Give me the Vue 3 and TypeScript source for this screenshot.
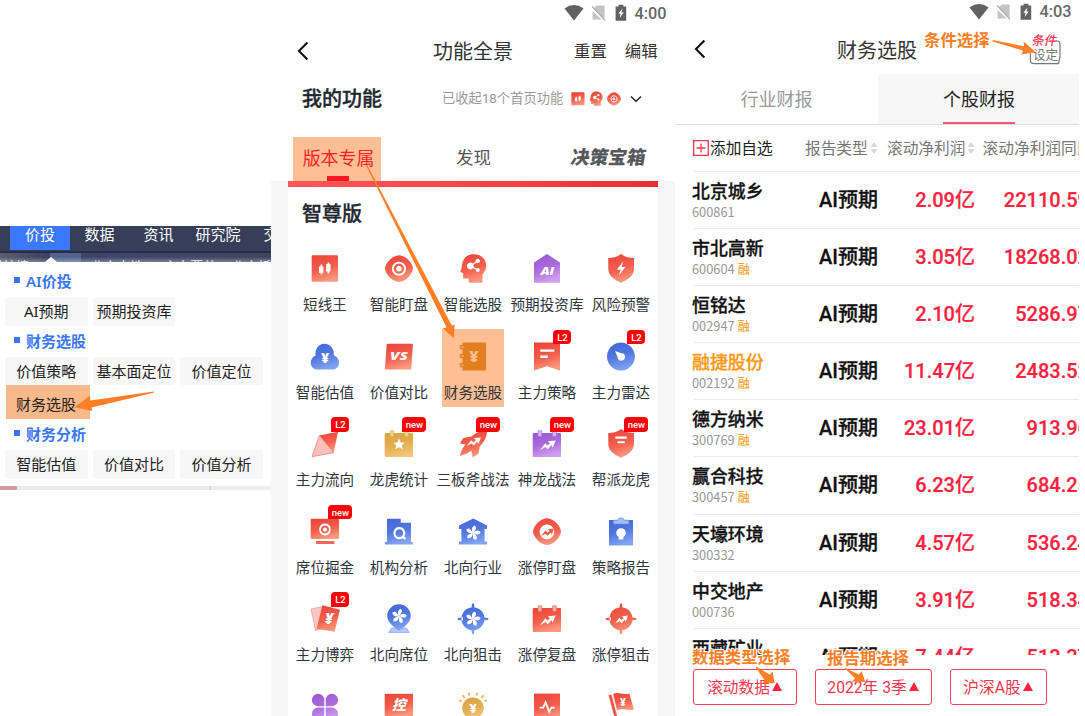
<script setup lang="ts">
interface Layer {
  d: string
  fill?: string
  stroke?: string
  w?: number
}
interface Glyph {
  t: string
  x: number
  y: number
  size: number
  fill?: string
  italic?: boolean
  len?: number
}
interface Icon {
  layers: Layer[]
  glyph?: Glyph
}
interface Tool {
  name: string
  icon: string
  badge?: string
  active?: boolean
}
interface Stock {
  name: string
  code: string
  margin?: boolean
  hot?: boolean
  profit: string
  growth: string
}

const R = 'url(#grad-red)'
const B = 'url(#grad-blue)'
const P = 'url(#grad-purple)'
const Y = 'url(#grad-gold)'

const shield = 'M16 1C20 4 25 5 29 5V16C29 23 22 27 16 29.7C10 27 3.3 23 3.3 16V5C8 5 12 4 16 1Z'
const eye = 'M2 15.6C2 11 9 2.3 16 2.3S30 11 30 15.6S23 29 16 29S2 20.2 2 15.6Z'
const zig = 'M9 22.2L14.3 15.2L16.6 17.6L19 15.2L16.8 13.2L24.8 12.4L21.5 19.8L20.6 17L16.8 21.2L14.4 19Z'
const calendar = 'M1.7 6Q1.7 5 3 5H29Q30 5 30 6V28Q30 29 29 29H3Q1.7 29 1.7 28Z'
const calTabs = 'M7 2.8H10.8V8.4H7ZM21.6 2.8H25.4V8.4H21.6Z'
const petal = (cx: number, cy: number, r: number): string => {
  let out = ''
  for (let i = 0; i < 5; i++) {
    const a = ((i * 72 - 80) * Math.PI) / 180
    const pt = (rad: number, off: number) =>
      `${(cx + rad * Math.cos(a + off)).toFixed(2)} ${(cy + rad * Math.sin(a + off)).toFixed(2)}`
    out += `M${cx} ${cy}Q${pt(r * 0.75, -0.7)} ${pt(r, 0)}Q${pt(r * 0.9, 0.5)} ${pt(r * 0.5, 0.45)}Z`
  }
  return out
}
const star = 'M16 10.6L17.7 14.4L21.6 14.8L18.7 17.4L19.6 21.3L16 19.3L12.4 21.3L13.3 17.4L10.4 14.8L14.3 14.4Z'
const cross = 'M16 4.2A11.6 11.6 0 1 1 15.9 4.2ZM15 .8Q16 0 17 .8L17.6 6H14.4ZM14.4 26H17.6L17 30.7Q16 31.6 15 30.7ZM1 15Q.2 16 1 17L6 17.4V14.3ZM31 15Q31.8 16 31 17L26 17.4V14.3Z'

const icons: Record<string, Icon> = {
  candles: {
    layers: [
      { d: 'M2.7 3.3Q2.7 2.3 3.7 2.3H28Q29 2.3 29 3.3V27.7Q29 28.7 28 28.7H3.7Q2.7 28.7 2.7 27.7Z', fill: R },
      { d: 'M10 13.4H11.6V11.6H13.2V13.4H14.4V20H13.2V21.6H11.6V20H10ZM17 11H18.6V9.6H20.2V11H21.5V18.4H20.2V20.4H18.6V18.4H17Z', fill: '#fff' },
    ],
  },
  eye: {
    layers: [
      { d: eye, fill: R },
      { d: 'M16 9.6A6.1 6.1 0 1 1 15.9 9.6Z', stroke: '#fff', w: 1.9 },
      { d: 'M16 12.8A2.9 2.9 0 1 1 15.9 12.8Z', fill: '#fff' },
    ],
  },
  head: {
    layers: [
      { d: 'M12 29.7L11.5 25.6H7.3Q6.2 25.6 6.2 24.2V20.4L3.2 18.6Q4.7 16 5 12.6C5.6 5 10.5 1.2 16.5 1.2C24 1.2 29.2 6 29.2 12.4C29.2 17 27 18.8 25.5 22V29.7Z', fill: R },
      { d: 'M13.4 13L20.6 8M13.4 13L20.6 17', stroke: '#fff', w: 1.4 },
      { d: 'M13.4 9.6A3.4 3.4 0 1 1 13.3 9.6ZM20.8 5.8A2.2 2.2 0 1 1 20.7 5.8ZM20.8 15A2 2 0 1 1 20.7 15Z', fill: '#fff' },
    ],
  },
  aihouse: {
    layers: [{ d: 'M16 1L29 9.6V28.7Q29 29.7 28 29.7H4Q3 29.7 3 28.7V9.6Z', fill: P }],
    glyph: { t: 'AI', x: 16.4, y: 21.8, size: 11, italic: true, len: 13.5 },
  },
  shieldBolt: {
    layers: [
      { d: shield, fill: R },
      { d: 'M18 8.5L11.8 16.8H15.5L14 22.3L20.5 14H16.8Z', fill: '#fff' },
    ],
  },
  cloud: {
    layers: [{ d: 'M8 28.5C3.8 28.5 1.7 25 1.7 21.8C1.7 18.6 3.6 16 6.6 14.6C5.6 8 9.6 2.8 15.5 2.8S25.4 8 24.8 14.2C28.2 15.6 30 18.2 30 21.8C30 25.6 27.6 28.5 24 28.5Z', fill: B }],
    glyph: { t: '¥', x: 16, y: 21.5, size: 14 },
  },
  vs: {
    layers: [{ d: 'M3.7 3.6Q3.8 2.8 4.8 2.8H29.2Q30 2.8 29.9 3.8L28.3 27.7Q28.2 28.5 27.4 28.5H2.6Q1.8 28.5 1.9 27.5Z', fill: R }],
    glyph: { t: 'VS', x: 16, y: 19.4, size: 11, italic: true, len: 18 },
  },
  notebook: {
    layers: [
      { d: 'M5.5 1.5H28Q29 1.5 29 2.5V28.5Q29 29.5 28 29.5H5.5Z', fill: '#e47f20' },
      { d: 'M3.2 4.4H7.5V7.8H3.2ZM3.2 13.4H7.5V16.8H3.2ZM3.2 22.4H7.5V25.8H3.2Z', fill: '#f39a4e', stroke: '#e07b1f', w: 1 },
    ],
    glyph: { t: '¥', x: 17, y: 20.5, size: 16, fill: '#ffc090' },
  },
  bookmark: {
    layers: [
      { d: 'M3 1.5H29V29.5L16 25.2L3 29.5Z', fill: R },
      { d: 'M9.3 8.6H23.3V10.8H9.3ZM9.3 14.6H16.8V16.9H9.3Z', fill: '#fff' },
    ],
  },
  radar: {
    layers: [
      { d: 'M16 1.6A14 14 0 1 1 15.9 1.6Z', fill: B },
      { d: 'M10 10L16.6 12.3A3.7 3.7 0 1 1 12.6 16.2Z', fill: '#fff' },
    ],
  },
  kite: {
    layers: [
      { d: 'M10.3 7.5L29 3.7L24.7 24.7Z', fill: R },
      { d: 'M10.3 7.5L24.7 24.7L3 28.7Z', fill: '#fbc0bc', stroke: '#ef7770', w: 0.7 },
    ],
  },
  calStar: {
    layers: [{ d: calendar, fill: Y }, { d: calTabs, fill: '#f5d38c', stroke: '#dba744', w: 0.6 }, { d: star, fill: '#fff' }],
  },
  rocket: {
    layers: [
      { d: 'M30 2.5C24 2.4 18.6 4.4 14.5 8.6L6.5 10L2.8 15.2L8.5 16.5L5.4 20.8L2.6 28L10 25.5L14.2 22.6L15.8 29.4L21.6 25.4L22.7 18.5C27 14 30.2 9 30 2.5Z', fill: R },
      { d: 'M9.6 18L14.3 12.2L16.6 14.4L18.8 12L16.8 10L24 9.4L21.2 16.2L20.2 13.6L16.8 17.6L14.4 15.6Z', fill: '#fff' },
    ],
  },
  calPurple: {
    layers: [{ d: calendar, fill: P }, { d: calTabs, fill: '#ddb8f2', stroke: '#a866d8', w: 0.6 }, { d: zig, fill: '#fff' }],
  },
  shieldLines: {
    layers: [{ d: shield, fill: R }, { d: 'M10.3 8.6H21.8V10.8H10.3ZM12.4 13.2H19.8V15.2H12.4Z', fill: '#fff' }],
  },
  monitor: {
    layers: [
      { d: 'M1.7 3.8Q1.7 2.8 2.7 2.8H29Q30 2.8 30 3.8V22Q30 23 29 23H2.7Q1.7 23 1.7 22Z', fill: R },
      { d: 'M7 25H25.4V28H7Z', fill: '#f0685b' },
      { d: 'M16 8.5A5 5 0 1 1 15.9 8.5Z', stroke: '#fff', w: 1.9 },
      { d: 'M16 11.5A2 2 0 1 1 15.9 11.5Z', fill: '#fff' },
    ],
  },
  building: {
    layers: [
      { d: 'M4 2.8H17.7V6.8H28V26H29.7V28.5H2V26H4Z', fill: B },
      { d: 'M16.4 12.2A5 5 0 1 1 16.3 12.2ZM19.6 20.6L22.4 23', stroke: '#fff', w: 2.2 },
    ],
  },
  houseFlower: {
    layers: [
      { d: 'M16.3 2.5L30 9.6V13H27.6V25.5H30V28.6H2V25.5H4.4V13H2V9.6Z', fill: B },
      { d: petal(16, 17, 7.6), fill: '#fff' },
    ],
  },
  eyeZig: {
    layers: [
      { d: eye, fill: R },
      { d: 'M16 8.6A7.3 7.3 0 1 1 15.9 8.6Z', fill: '#fff' },
      { d: 'M10 20.2L14.3 14.6L16.6 16.8L18.6 15L17 13.2L22.8 12.6L20.8 18.4L19.8 16.6L16.6 19.8L14.4 17.8Z', fill: '#ef5540' },
    ],
  },
  clipboard: {
    layers: [
      { d: 'M4 4H28V29.5H4Z', fill: B },
      { d: 'M8.5 4.2H12.6Q13 1.8 16 1.8T19.4 4.2H23.8V8H8.5Z', fill: '#a6bcf5', stroke: '#6f8fe6', w: 0.6 },
      { d: 'M16 12.2A4.6 4.6 0 0 1 18.4 20.8V23.4H13.6V20.8A4.6 4.6 0 0 1 16 12.2Z', fill: '#fff' },
    ],
  },
  cards: {
    layers: [
      { d: 'M2 6L14 3.4L18 24.6L6.5 27.6Z', fill: '#fac6c4', stroke: '#f08b86', w: 0.6 },
      { d: 'M13.4 2.2L31 6.8L25.6 28.8L7.6 25.8Z', fill: R },
    ],
    glyph: { t: '¥', x: 20, y: 20.5, size: 15, italic: true },
  },
  pin: {
    layers: [
      { d: 'M8.5 25H23.5L26.3 29.5H5.7Z', fill: '#b5c7f7', stroke: '#7898ec', w: 0.6 },
      { d: 'M16 1.3A11.8 11.8 0 0 1 27.8 13C27.8 19 21 25 16 27.4C11 25 4.2 19 4.2 13A11.8 11.8 0 0 1 16 1.3Z', fill: B },
      { d: petal(16, 13.2, 7.6), fill: '#fff' },
    ],
  },
  crossFlower: {
    layers: [{ d: cross, fill: B }, { d: petal(16, 16, 7.6), fill: '#fff' }],
  },
  calRed: {
    layers: [{ d: calendar, fill: R }, { d: calTabs, fill: '#fbb3a8', stroke: '#ee5b4b', w: 0.6 }, { d: zig, fill: '#fff' }],
  },
  crossZig: {
    layers: [
      { d: cross, fill: R },
      { d: 'M10 20.6L14.3 14.8L16.6 17L18.6 15.2L17 13.2L23 12.4L20.8 18.8L19.8 16.8L16.6 20.2L14.4 18.2Z', fill: '#fff' },
    ],
  },
  clover: {
    layers: [
      { d: 'M15.3 15.2H9.4A6.2 6.2 0 1 1 15.3 9ZM16.7 15.2V9A6.2 6.2 0 1 1 22.6 15.2ZM15.3 16.6V23A6.2 6.2 0 1 1 9.4 16.6ZM16.7 16.6H22.6A6.2 6.2 0 1 1 16.7 23Z', fill: P },
    ],
  },
  control: {
    layers: [{ d: 'M1.7 2.8H30V26H1.7Z', fill: R }],
    glyph: { t: '控', x: 16, y: 19, size: 14, italic: true },
  },
  sun: {
    layers: [
      { d: 'M16 6.4A10.8 10.8 0 1 1 15.9 6.4Z', fill: Y },
      { d: 'M11.6 1.8L12.6 4.6M20.4 1.8L19.4 4.6M5.4 4.2L7.6 7M26.6 4.2L24.4 7M2.2 9.2L4.6 10.4M29.8 9.2L27.4 10.4', stroke: '#e9b55a', w: 1.8 },
    ],
    glyph: { t: '¥', x: 16, y: 22, size: 13 },
  },
  pulse: {
    layers: [
      { d: 'M3 2.6H29V29H3Z', fill: R },
      { d: 'M8.6 16.6H12.2L14.6 11.4L18.2 20.8L20.4 16.6H23.6', stroke: '#fff', w: 1.8 },
    ],
  },
  flag: {
    layers: [
      { d: 'M3.6 4.2L6.4 3.4L13.4 30L10.4 30Z', fill: '#ee5548' },
      { d: 'M8.2 3C13 .4 17 4.2 24.4 2.8L29 18.4C22 20.6 17.6 16.6 12 19.4Z', fill: R },
    ],
    glyph: { t: '¥', x: 18, y: 14.6, size: 10 },
  },
}

const tools: Tool[] = [
  { name: '短线王', icon: 'candles' },
  { name: '智能盯盘', icon: 'eye' },
  { name: '智能选股', icon: 'head' },
  { name: '预期投资库', icon: 'aihouse' },
  { name: '风险预警', icon: 'shieldBolt' },
  { name: '智能估值', icon: 'cloud' },
  { name: '价值对比', icon: 'vs' },
  { name: '财务选股', icon: 'notebook', active: true },
  { name: '主力策略', icon: 'bookmark', badge: 'L2' },
  { name: '主力雷达', icon: 'radar', badge: 'L2' },
  { name: '主力流向', icon: 'kite', badge: 'L2' },
  { name: '龙虎统计', icon: 'calStar', badge: 'new' },
  { name: '三板斧战法', icon: 'rocket', badge: 'new' },
  { name: '神龙战法', icon: 'calPurple', badge: 'new' },
  { name: '帮派龙虎', icon: 'shieldLines', badge: 'new' },
  { name: '席位掘金', icon: 'monitor', badge: 'new' },
  { name: '机构分析', icon: 'building' },
  { name: '北向行业', icon: 'houseFlower' },
  { name: '涨停盯盘', icon: 'eyeZig' },
  { name: '策略报告', icon: 'clipboard' },
  { name: '主力博弈', icon: 'cards', badge: 'L2' },
  { name: '北向席位', icon: 'pin' },
  { name: '北向狙击', icon: 'crossFlower' },
  { name: '涨停复盘', icon: 'calRed' },
  { name: '涨停狙击', icon: 'crossZig' },
  { name: '', icon: 'clover' },
  { name: '', icon: 'control' },
  { name: '', icon: 'sun' },
  { name: '', icon: 'pulse' },
  { name: '', icon: 'flag' },
]

const stocks: Stock[] = [
  { name: '北京城乡', code: '600861', profit: '2.09亿', growth: '22110.59' },
  { name: '市北高新', code: '600604', margin: true, profit: '3.05亿', growth: '18268.02' },
  { name: '恒铭达', code: '002947', margin: true, profit: '2.10亿', growth: '5286.97' },
  { name: '融捷股份', code: '002192', margin: true, hot: true, profit: '11.47亿', growth: '2483.52' },
  { name: '德方纳米', code: '300769', margin: true, profit: '23.01亿', growth: '913.96' },
  { name: '赢合科技', code: '300457', margin: true, profit: '6.23亿', growth: '684.25' },
  { name: '天壕环境', code: '300332', profit: '4.57亿', growth: '536.24' },
  { name: '中交地产', code: '000736', profit: '3.91亿', growth: '518.34' },
  { name: '西藏矿业', code: '000762', profit: '7.44亿', growth: '513.37' },
]

const collapsed = ['candles', 'head', 'eye']
</script>

<template>
  <div class="stage">
    <svg class="defs" width="0" height="0">
      <defs>
        <linearGradient id="grad-red" x1="0.2" y1="0" x2="0.5" y2="1">
          <stop offset="0" stop-color="#ee4439" /><stop offset="0.55" stop-color="#f2604d" /><stop offset="1" stop-color="#fc9a80" />
        </linearGradient>
        <linearGradient id="grad-blue" x1="0.2" y1="0" x2="0.5" y2="1">
          <stop offset="0" stop-color="#4468d8" /><stop offset="0.5" stop-color="#5078df" /><stop offset="1" stop-color="#83a5f3" />
        </linearGradient>
        <linearGradient id="grad-purple" x1="0.2" y1="0" x2="0.5" y2="1">
          <stop offset="0" stop-color="#9a58d2" /><stop offset="0.5" stop-color="#ab6bdc" /><stop offset="1" stop-color="#cfa0ee" />
        </linearGradient>
        <linearGradient id="grad-gold" x1="0.2" y1="0" x2="0.5" y2="1">
          <stop offset="0" stop-color="#dba448" /><stop offset="0.5" stop-color="#e2ad4f" /><stop offset="1" stop-color="#f0c878" />
        </linearGradient>
      </defs>
    </svg>

    <section class="desk">
      <nav class="desk-nav">
        <span class="on">价投</span><span>数据</span><span>资讯</span><span class="wide">研究院</span><span class="cut">交</span>
      </nav>
      <div class="desk-line"></div>
      <div class="desk-strip"><i class="sel"></i><span class="s1">财神榜</span><span class="s2">北京本地</span><span class="s3">主力覆盖</span><span class="s4">北京板</span><i class="tip"></i></div>
      <div class="menu">
        <h4 class="first">AI价投</h4>
        <div class="chips"><span>AI预期</span><span>预期投资库</span></div>
        <h4>财务选股</h4>
        <div class="chips short"><span>价值策略</span><span>基本面定位</span><span>价值定位</span></div>
        <div class="picked">财务选股</div>
        <h4>财务分析</h4>
        <div class="chips"><span>智能估值</span><span>价值对比</span><span>价值分析</span></div>
      </div>
      <div class="desk-foot"></div>
    </section>

    <section class="phone mid">
      <div class="status">
        <svg width="64" height="18" viewBox="0 0 64 18">
          <path d="M.5 4.4Q10 -2.4 19.5 4.4L10 16.4Z" fill="#616161" />
          <path d="M33 1.4H40.6V15L29.2 4.6ZM28.6 7L37.6 15.6H28.6Z" fill="#c4c4c4" /><path d="M28 2.4L41 16.4" stroke="#aaa" stroke-width="1.2" />
          <path d="M51.6 2.4H54.6V.8H59.4V2.4H62.2V16.8H51.6Z" fill="#616161" /><path d="M58.4 4.6L54.4 9.8H56.6L55.6 14L59.8 8.6H57.4Z" fill="#fff" />
        </svg>
        <b>4:00</b>
      </div>
      <header>
        <svg class="back" width="12" height="20" viewBox="0 0 12 20"><path d="M10.4 1.4L2 10L10.4 18.6" fill="none" stroke="#111" stroke-width="2.1" /></svg>
        <span class="title">功能全景</span>
        <span class="acts"><span>重置</span><span>编辑</span></span>
      </header>
      <div class="mine">
        <strong>我的功能</strong>
        <span class="note">已收起18个首页功能</span>
        <svg v-for="k in collapsed" :key="k" class="mini" width="16" height="16" viewBox="0 0 32 32">
          <path v-for="(l, i) in icons[k].layers" :key="i" :d="l.d" :fill="l.fill || 'none'" :stroke="l.stroke" :stroke-width="l.w" />
        </svg>
        <svg class="down" width="12" height="8" viewBox="0 0 12 8"><path d="M1 1.4L6 6.2L11 1.4" fill="none" stroke="#222" stroke-width="1.4" /></svg>
      </div>
      <div class="tabs">
        <span class="t1">版本专属<i></i></span><span class="t2">发现</span><span class="t3">决策宝箱</span>
      </div>
      <div class="sheet">
        <div class="band"></div>
        <h3>智尊版</h3>
        <div class="grid">
          <div v-for="(t, n) in tools" :key="n" class="cell" :class="{ active: t.active }">
            <div class="pic">
              <svg width="32" height="32" viewBox="0 0 32 32">
                <path v-for="(l, i) in icons[t.icon].layers" :key="i" :d="l.d" :fill="l.fill || 'none'" :stroke="l.stroke" :stroke-width="l.w" />
                <text v-if="icons[t.icon].glyph" class="glyph" :class="{ slant: icons[t.icon].glyph!.italic }" text-anchor="middle" :x="icons[t.icon].glyph!.x" :y="icons[t.icon].glyph!.y" :font-size="icons[t.icon].glyph!.size" :textLength="icons[t.icon].glyph!.len" lengthAdjust="spacingAndGlyphs" :fill="icons[t.icon].glyph!.fill || '#fff'">{{ icons[t.icon].glyph!.t }}</text>
              </svg>
              <em v-if="t.badge" :class="t.badge === 'L2' ? 'lv' : 'nw'">{{ t.badge }}</em>
            </div>
            <span class="lab">{{ t.name }}</span>
          </div>
        </div>
      </div>
    </section>

    <section class="phone right">
      <div class="status up">
        <svg width="64" height="18" viewBox="0 0 64 18">
          <path d="M.5 4.4Q10 -2.4 19.5 4.4L10 16.4Z" fill="#616161" />
          <path d="M33 1.4H40.6V15L29.2 4.6ZM28.6 7L37.6 15.6H28.6Z" fill="#c4c4c4" /><path d="M28 2.4L41 16.4" stroke="#aaa" stroke-width="1.2" />
          <path d="M51.6 2.4H54.6V.8H59.4V2.4H62.2V16.8H51.6Z" fill="#616161" /><path d="M58.4 4.6L54.4 9.8H56.6L55.6 14L59.8 8.6H57.4Z" fill="#fff" />
        </svg>
        <b>4:03</b>
      </div>
      <header class="rhead">
        <svg class="back" width="12" height="20" viewBox="0 0 12 20"><path d="M10.4 1.4L2 10L10.4 18.6" fill="none" stroke="#111" stroke-width="2.1" /></svg>
        <span class="title">财务选股</span>
        <span class="cond">
          <svg width="32" height="26" viewBox="0 0 32 26"><path d="M27 1H28Q31 1 31 4V17L29.5 23.6H5Q1.4 23.6 1.4 20.5V13" fill="none" stroke="#777" stroke-width="1.2" /></svg>
          <i>条件</i><u>设定</u>
        </span>
      </header>
      <div class="rtabs"><span>行业财报</span><span class="cur">个股财报<i></i></span></div>
      <div class="table">
        <div class="thead">
          <span class="add"><svg width="16" height="16" viewBox="0 0 16 16"><path d="M.7 .7H15.3V15.3H.7ZM3.5 8H12.5M8 3.5V12.5" fill="none" stroke="#f5344f" stroke-width="1.3" /></svg>添加自选</span>
          <span class="h2">报告类型<svg class="sort" width="8" height="12" viewBox="0 0 8 12"><path d="M4 0L7.5 5H.5ZM4 12L7.5 7H.5Z" fill="#d9d9d9" /></svg></span>
          <span class="h3">滚动净利润<svg class="sort" width="8" height="12" viewBox="0 0 8 12"><path d="M4 0L7.5 5H.5ZM4 12L7.5 7H.5Z" fill="#d9d9d9" /></svg></span>
          <span class="h4">滚动净利润同比</span>
        </div>
        <div v-for="s in stocks" :key="s.code" class="row">
          <div class="who">
            <strong :class="{ hot: s.hot }">{{ s.name }}</strong>
            <small>{{ s.code }}<span v-if="s.margin">融</span></small>
          </div>
          <span class="kind">AI预期</span>
          <span class="profit">{{ s.profit }}</span>
          <span class="growth">{{ s.growth }}</span>
        </div>
      </div>
      <div class="filters">
        <span class="f1">滚动数据<i></i></span><span class="f2">2022年 3季<i></i></span><span class="f3">沪深A股<i></i></span>
      </div>
    </section>

    <span class="mark m1">条件选择</span>
    <span class="mark m2">数据类型选择</span>
    <span class="mark m3">报告期选择</span>
    <svg class="arrows" width="1085" height="716" viewBox="0 0 1085 716">
      <path d="M153.5 391.5L90.3 400.6L90 395.6L74.6 407.3L92.3 411L91.6 407.6L153.5 392.8Z" />
      <path d="M365.8 165L446.6 327.6L442.8 328.2L453.8 338.4L454.6 324.4L451.8 325.6L367.2 165Z" />
      <path d="M992.5 40L1024 46.2L1023.6 41.4L1035.5 52L1021.4 54.6L1023 50.6L992.5 41.4Z" />
      <path d="M756 666.5L769.8 674.8L772.6 671.6L774.6 683.2L761.6 683.6L764.8 680.4L755.6 667.6Z" />
      <path d="M844 667.5L859 674.4L861.6 671.2L865.4 682L851.6 681.6L855.2 678.6Z" />
    </svg>
  </div>
</template>

<style>
html,
body {
  margin: 0;
  background: #fff;
}
</style>

<style scoped>
.stage {
  position: relative;
  display: flex;
  width: 1085px;
  height: 716px;
  overflow: hidden;
  background: #fff;
  font-family: Roboto, 'Noto Sans CJK SC', sans-serif;
  color: #333;
  white-space: nowrap;
}
.defs {
  position: absolute;
}
svg {
  display: block;
  flex: none;
}
i,
em,
u {
  font-style: normal;
  text-decoration: none;
}

.desk {
  width: 271px;
  height: 264px;
  margin-top: 226px;
  flex: none;
  overflow: hidden;
  font-family: 'Noto Sans', 'Noto Sans CJK SC', sans-serif;
  font-size: 15px;
}
.desk-nav {
  display: flex;
  height: 24px;
  padding-left: 10px;
  background: #373e58;
  color: #fff;
  line-height: 16px;
}
.desk-nav span {
  width: 60px;
  flex: none;
  text-align: center;
}
.desk-nav span + span {
  width: 59px;
}
.desk-nav .on {
  background: #3a78fd;
}
.desk-nav .wide.wide {
  width: 60px;
}
.desk-nav .cut.cut {
  width: 32px;
  padding-left: 7px;
}
.desk-line {
  height: 3px;
  background: #272d46;
  border-top: 1px solid #353d68;
  box-sizing: border-box;
}
.desk-strip {
  position: relative;
  display: flex;
  height: 9px;
  overflow: hidden;
  background: linear-gradient(90deg, #5b5c6d, #3b4160 18%, #3e466a 45%, #40455f);
  color: #e4e6ee;
  font-size: 13px;
  line-height: 27px;
}
.desk-strip::after {
  content: '';
  position: absolute;
  inset: 4px 0 0;
  background: linear-gradient(rgba(255, 255, 255, 0), rgba(255, 255, 255, 0.3));
}
.desk-strip .sel {
  position: absolute;
  left: 50px;
  width: 31px;
  height: 9px;
  background: #53628f;
}
.desk-strip .s1 {
  width: 92px;
  margin-left: -10px;
}
.desk-strip .s2 {
  width: 76px;
  margin-left: 12px;
}
.desk-strip .s3 {
  width: 70px;
}
.desk-strip .tip {
  position: absolute;
  left: 45px;
  bottom: 0;
  z-index: 1;
  border: 6px solid transparent;
  border-top: 0;
  border-bottom: 5px solid #fff;
}
.menu {
  height: 224px;
  box-sizing: border-box;
  background: #fff;
  border-radius: 0 0 5px 0;
}
.menu h4 {
  display: flex;
  align-items: center;
  height: 31px;
  margin: 0;
  padding: 0 0 2px 14px;
  box-sizing: border-box;
  color: #3a76f8;
  font-size: 15px;
  font-weight: 600;
}
.menu h4::before {
  content: '';
  width: 6px;
  height: 6px;
  margin: -1px 6px 0 0;
  background: #3a76f8;
}
.menu .first {
  height: 35px;
  padding-top: 4px;
}
.chips {
  display: flex;
  gap: 5px;
  height: 29px;
  padding-left: 5px;
}
.chips.short {
  height: 28px;
}
.chips span {
  width: 82.6px;
  border-radius: 3px;
  background: #f7f7f7;
  color: #222;
  line-height: 28px;
  text-align: center;
}
.picked {
  width: 84px;
  height: 34px;
  margin-left: 6px;
  padding-left: 10px;
  box-sizing: border-box;
  background: #fab98a;
  color: #222;
  line-height: 38px;
}
.desk-foot {
  height: 4px;
  background: linear-gradient(90deg, #d99aa0 0 17px, #ececec 17px 210px, #d0d0d0 210px 211px, #efefef 211px);
}

.phone {
  width: 404px;
  height: 716px;
  flex: none;
  overflow: hidden;
}
.status {
  display: flex;
  height: 25px;
  padding: 4px 0 0 293px;
  box-sizing: border-box;
  color: #666;
}
.status b {
  margin-left: 6.5px;
  font-size: 16.3px;
  font-weight: 500;
  line-height: 20px;
}
.status.up {
  height: 24px;
  padding-top: 3px;
  padding-left: 294px;
}
.status.up b {
  line-height: 18px;
}
header {
  position: relative;
  display: flex;
  align-items: center;
  height: 52px;
}
.back {
  margin-left: 26px;
}
.title {
  width: 80px;
  margin: -2px 0 0 124px;
  font-size: 20px;
}
.acts {
  display: flex;
  gap: 18px;
  margin: -2px 0 0 61px;
  font-size: 16.4px;
}
.mine {
  display: flex;
  align-items: center;
  height: 43px;
  padding-left: 31px;
}
.mine strong {
  width: 140px;
  margin-top: -2px;
  color: #22262e;
  font-size: 20px;
  font-weight: 500;
  -webkit-text-stroke: 0.35px #22262e;
}
.note {
  width: 128px;
  margin-top: -2px;
  color: #999;
  font-size: 13.3px;
}
.mini {
  margin-right: 2px;
}
.down {
  margin-left: 6px;
}
.tabs {
  display: flex;
  height: 44px;
  margin-top: 17px;
  padding-left: 22px;
}
.tabs span {
  line-height: 43px;
}
.tabs .t1 {
  position: relative;
  width: 88px;
  padding-left: 3px;
  box-sizing: border-box;
  background: #ffbf94;
  color: #fc1e26;
  font-size: 17.9px;
  text-align: center;
}
.t1 i {
  position: absolute;
  left: 34px;
  bottom: 0;
  width: 22px;
  height: 5px;
  background: #fb1820;
}
.tabs .t2 {
  margin-left: 75px;
  color: #555;
  font-size: 17.5px;
}
.tabs .t3 {
  margin-left: 80px;
  color: #55585c;
  font-size: 18.6px;
  font-weight: 900;
  transform: skewX(-10deg);
}
.sheet {
  position: relative;
  height: 535px;
  margin: 0;
  border: solid #f6f6f6;
  border-width: 0 17px;
  box-sizing: border-box;
}
.band {
  height: 5.5px;
  background: linear-gradient(90deg, #ff585a, #e83034);
}
h3 {
  height: 66.5px;
  margin: 0;
  padding: 12px 0 0 14px;
  box-sizing: border-box;
  color: #22262e;
  font-size: 20px;
  font-weight: 500;
  line-height: 30px;
  -webkit-text-stroke: 0.3px #22262e;
}
.grid {
  display: grid;
  grid-template-columns: repeat(5, 74px);
  grid-auto-rows: 87.5px;
}
.cell {
  position: relative;
  display: flex;
  flex-direction: column;
  align-items: center;
}
.active::before {
  content: '';
  position: absolute;
  left: 6px;
  top: -11.5px;
  width: 62px;
  height: 78px;
  background: #ffbf94;
}
.pic {
  position: relative;
  width: 32px;
  height: 32px;
}
.pic em {
  position: absolute;
  top: -11px;
  height: 14.5px;
  border-radius: 4px 4px 4px 0;
  background: #fe0000;
  color: #fff;
  font-size: 9.5px;
  font-weight: 500;
  line-height: 15px;
  text-align: center;
}
.pic .lv {
  left: 22.4px;
  width: 18px;
}
.pic .nw {
  left: 19.4px;
  width: 24px;
}
.lab {
  position: relative;
  margin-top: 8px;
  color: #30343c;
  font-size: 14.6px;
  line-height: 24px;
}
.glyph {
  font-family: 'Open Sans', 'Noto Sans CJK SC', sans-serif;
  font-weight: 800;
}
.slant {
  font-style: italic;
}

.rhead {
  height: 50px;
}
.rhead .back {
  margin-left: 19px;
}
.rhead .title {
  margin: 0 0 0 131px;
}
.cond {
  position: absolute;
  left: 354px;
  top: 10px;
  width: 34px;
  height: 34px;
  font-size: 12.6px;
  line-height: 14px;
}
.cond svg {
  position: absolute;
  left: 0;
  top: 5.5px;
}
.cond i {
  position: absolute;
  left: 2.5px;
  top: 0;
  color: #f5344f;
  font-weight: 500;
  transform: skewX(-12deg);
}
.cond u {
  position: absolute;
  left: 4px;
  top: 13.5px;
  color: #777;
}
.rtabs {
  display: flex;
  height: 51px;
  border-bottom: 1px solid #dedede;
  box-sizing: border-box;
  font-size: 18px;
  line-height: 51px;
  text-align: center;
  color: #999;
}
.rtabs span {
  width: 203px;
  height: 50px;
}
.rtabs .cur {
  display: flex;
  flex-direction: column;
  align-items: center;
  width: 201px;
  padding-left: 1px;
  box-sizing: border-box;
  background: #f7f7f7;
  color: #222;
}
.cur i {
  width: 72px;
  height: 2px;
  margin-top: -3px;
  background: #f5596e;
}
.table {
  height: 530px;
  overflow: hidden;
  padding-left: 18px;
}
.thead {
  display: flex;
  height: 47px;
  border-bottom: 1px solid #eaeaea;
  box-sizing: border-box;
  color: #777;
  font-size: 15.7px;
  line-height: 47px;
}
.thead span {
  display: flex;
  align-items: center;
  flex: none;
}
.thead .add {
  width: 112px;
  gap: 1px;
  color: #222;
}
.thead .h2 {
  width: 82px;
}
.thead .h3 {
  width: 95.6px;
}
.sort {
  margin-left: 2px;
}
.row {
  display: flex;
  height: 57.1px;
  border-bottom: 1px solid #eaeaea;
  box-sizing: border-box;
}
.who {
  width: 111px;
  margin-left: -1px;
  padding-top: 8px;
  flex: none;
}
.who strong {
  display: block;
  color: #111;
  font-size: 17.9px;
  font-weight: 500;
  line-height: 24px;
  -webkit-text-stroke: 0.3px currentColor;
}
.who .hot {
  color: #fb9a12;
}
.who small {
  display: flex;
  color: #999;
  font-family: 'Noto Sans CJK SC', sans-serif;
  font-size: 12.8px;
  line-height: 15px;
}
.who small span {
  margin-left: 3px;
  color: #f7a02c;
  font-size: 12px;
  font-weight: 500;
}
.kind {
  width: 75px;
  flex: none;
  color: #111;
  font-size: 20px;
  font-weight: 500;
  line-height: 56px;
  text-align: right;
  -webkit-text-stroke: 0.3px currentColor;
}
.profit,
.growth {
  flex: none;
  color: #fc2240;
  font-size: 20px;
  font-weight: 500;
  line-height: 56px;
  text-align: right;
  -webkit-text-stroke: 0.2px currentColor;
}
.profit {
  width: 97px;
}
.growth {
  width: 114px;
}
.filters {
  display: flex;
  padding: 14px 0 0 18px;
}
.filters span {
  display: flex;
  align-items: center;
  justify-content: center;
  height: 36px;
  padding: 0 1px 2px 0;
  border: 1.3px solid #f5415a;
  border-radius: 3px;
  box-sizing: border-box;
  color: #f8354f;
  font-size: 15.7px;
}
.filters i {
  margin-left: 2px;
  border: 5px solid transparent;
  border-top: 0;
  border-bottom: 9px solid #fc2240;
}
.f1 {
  width: 104px;
}
.f2 {
  width: 117px;
  margin-left: 18px;
}
.f3 {
  width: 97px;
  margin-left: 18px;
}

.mark {
  position: absolute;
  color: #ff7f27;
  font-size: 16.4px;
  font-weight: 700;
  line-height: 20px;
  text-shadow: 1px 0 #fff, -1px 0 #fff, 0 1px #fff, 0 -1px #fff, 1px 1px 1px #fff, -1px -1px 1px #fff;
}
.m1 {
  left: 924px;
  top: 31px;
}
.m2 {
  left: 692px;
  top: 648px;
}
.m3 {
  left: 827px;
  top: 649px;
}
.arrows {
  position: absolute;
  left: 0;
  top: 0;
  fill: #ff7f27;
  pointer-events: none;
}
</style>
